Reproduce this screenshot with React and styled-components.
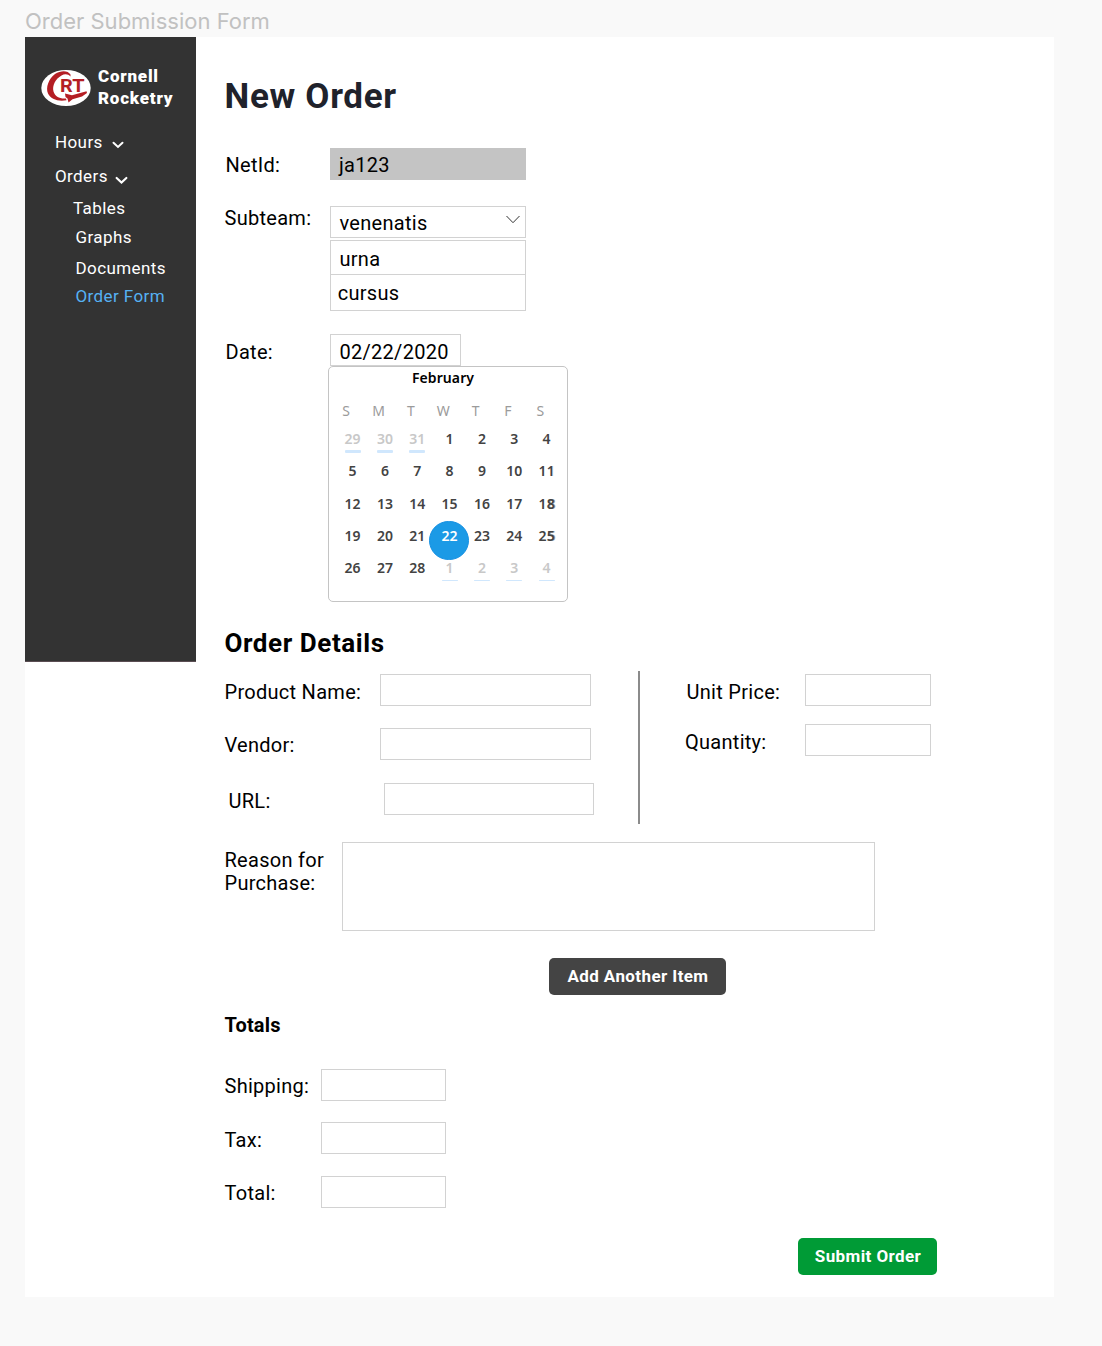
import React from "react";
import styled, { createGlobalStyle, css } from "styled-components";

const GlobalStyle = createGlobalStyle`
  *, *::before, *::after { box-sizing: border-box; }
  body { margin: 0; background: #f9f9f9; font-family: Roboto, "Liberation Sans", sans-serif; color: #000; }
  h1, h2, h3, p { margin: 0; }
`;

const Page = styled.div`
  width: 1102px;
  height: 1346px;
  background: #f9f9f9;
  overflow: hidden;
`;
const FrameTitle = styled.div`
  height: 37px;
  padding: 7px 0 0 25px;
  font: 400 22px/28px Inter, sans-serif;
  color: #c1c1c1;
  white-space: nowrap;
`;
const Frame = styled.div`
  display: flex;
  align-items: flex-start;
  width: 1029px;
  height: 1260px;
  margin-left: 25px;
  background: #fff;
`;
const Sidebar = styled.aside`
  flex: none;
  width: 171px;
  height: 625px;
  padding-top: 29px;
  background: #333;
  border-bottom: 1px solid #5a4d52;
  color: #fff;
`;
const Brand = styled.div`
  display: flex;
  align-items: flex-start;
  gap: 7px;
  padding-left: 16px;
  height: 66px;
  svg { flex: none; margin-top: 3px; }
`;
const BrandName = styled.div`
  font-weight: 900;
  font-size: 17px;
  line-height: 21.5px;
  letter-spacing: 0.78px;
`;
const NavItem = styled.a`
  display: flex;
  align-items: center;
  height: ${(p) => p.$height}px;
  padding-left: ${(p) => p.$indent}px;
  font-size: 17px;
  line-height: 20px;
  letter-spacing: 0.4px;
  white-space: nowrap;
  color: ${(p) => (p.$active ? "#56b1f3" : "#fff")};
  svg { margin: ${(p) => p.$iconTop || 0}px 0 0 ${(p) => p.$iconGap || 0}px; }
`;

const Main = styled.main`
  width: 858px;
  padding-left: 28.5px;
`;
const PageHeading = styled.h1`
  margin-top: 39px;
  height: 72px;
  font-size: 35px;
  line-height: 41px;
  font-weight: 700;
  letter-spacing: 0.7px;
  color: #20222b;
`;
const SectionHeading = styled.h2`
  height: 47px;
  font-size: 26px;
  line-height: 32px;
  font-weight: 700;
  letter-spacing: 0.58px;
`;
const SubHeading = styled.h3`
  height: 56px;
  font-size: 20px;
  line-height: 24px;
  font-weight: 700;
  letter-spacing: 0.2px;
`;
const Row = styled.div`
  display: flex;
  align-items: flex-start;
  height: ${(p) => p.$height}px;
  padding-left: ${(p) => p.$shift || 0}px;
`;
const Label = styled.label`
  flex: none;
  width: ${(p) => p.$width}px;
  padding: ${(p) => p.$top ?? 5}px 0 0 ${(p) => p.$indent || 0}px;
  font-size: 20px;
  line-height: ${(p) => p.$leading || 24}px;
  letter-spacing: 0.28px;
  white-space: nowrap;
`;
const box = css`
  display: flex;
  justify-content: space-between;
  border: 1px solid #d2d2d2;
  background: #fff;
  font-size: 20px;
  line-height: 24px;
  letter-spacing: 0.28px;
`;
const Field = styled.div`
  ${box}
  width: ${(p) => p.$width}px;
  height: ${(p) => p.$height || 32}px;
  padding: ${(p) => p.$top ?? 4}px 5px 0 ${(p) => p.$inset ?? 8.5}px;
  ${(p) => p.$disabled && "background: #c4c4c4; border-color: #c4c4c4;"}
`;
const Select = styled.div`
  width: 196px;
`;
const Options = styled.div`
  margin-top: 2px;
  border: 1px solid #d2d2d2;
`;
const Option = styled.div`
  height: ${(p) => p.$height}px;
  padding: ${(p) => p.$top}px 0 0 ${(p) => p.$inset}px;
  font-size: 20px;
  line-height: 24px;
  letter-spacing: 0.28px;
  & + & { border-top: 1px solid #d2d2d2; }
`;
const DateRow = styled(Row)`
  position: relative;
`;
const Calendar = styled.div`
  position: absolute;
  left: 103.5px;
  top: 32px;
  width: 240px;
  height: 236px;
  border: 1px solid #c4c4c4;
  border-radius: 5px;
  background: #fff;
  font-family: "Noto Sans", "Open Sans", sans-serif;
  font-size: 14px;
`;
const Month = styled.div`
  height: 35px;
  padding: 1px 10px 0 0;
  text-align: center;
  line-height: 20px;
  letter-spacing: 0.1px;
  font-weight: 600;
`;
const Weekdays = styled.div`
  display: grid;
  grid-template-columns: repeat(7, 32.35px);
  height: 28px;
  padding-left: 1px;
  line-height: 18px;
  text-align: center;
  color: #9b9b9b;
`;
const Days = styled.div`
  display: grid;
  grid-template-columns: repeat(7, 32.35px);
  grid-auto-rows: 32.35px;
  padding-left: 7.4px;
`;
const Day = styled.div`
  position: relative;
  text-align: center;
  line-height: 18px;
  font-weight: 600;
  color: ${(p) => (p.$muted ? "#c8c8c8" : "#434343")};
  ${(p) =>
    p.$muted &&
    css`
      &::after {
        content: "";
        display: block;
        width: 16px;
        height: ${p.$late ? 1.4 : 3}px;
        margin: ${p.$late ? 2.4 : 2}px auto 0;
        border-radius: 1px;
        background: #d0e7fd;
      }
    `}
  ${(p) =>
    p.$selected &&
    css`
      color: #fff;
      z-index: 1;
      &::before {
        content: "";
        position: absolute;
        z-index: -1;
        left: -4.2px;
        top: -6.3px;
        width: 39.5px;
        height: 39.5px;
        border: 1px solid #1590e3;
        border-radius: 50%;
        background: #1b9ae6;
      }
    `}
`;
const DoubledDigit = styled.span`
  text-shadow: 1px 0 ${(p) => (p.$faint ? "#eee" : "#9a9a9a")};
`;
const Details = styled.div`
  display: flex;
  height: 168px;
`;
const DetailsLeft = styled.div`
  width: 413.5px;
`;
const DetailsRight = styled.div`
  width: 320px;
  padding-left: 45px;
`;
const Divider = styled.div`
  flex: none;
  width: 2px;
  height: 153px;
  margin-top: -3px;
  background: #8b8b8b;
`;
const Actions = styled.div`
  display: flex;
  height: ${(p) => p.$height}px;
  padding-left: ${(p) => p.$offset}px;
`;
const Button = styled.button`
  width: ${(p) => p.$width}px;
  height: 37px;
  padding: 0 0 1px 1px;
  border: 0;
  border-radius: 5px;
  background: ${(p) => (p.$primary ? "#009b36" : "#444")};
  color: #fff;
  font: 700 17px/20px Roboto, sans-serif;
  letter-spacing: 0.4px;
  white-space: nowrap;
`;

const Logo = () => (
  <svg width="50" height="38" viewBox="0 0 50 38">
    <ellipse cx="25" cy="19" rx="24.7" ry="18" fill="#fff" />
    <path d="M29.500 5.500C27 1.300 20 1 14 5C7.500 10 4.500 18.500 7 24.500C9.500 30 17 32.800 25.500 31.200L25 29.500C18.500 30 14 27.500 12.500 22.500C11 16.500 14.500 9.800 20.500 6.500C23.500 4.800 27 4.800 29.500 7.500Z" fill="#b41e24" />
    <path d="M24 24.500L31 26.300L45.500 22.300L46 24L41 27.500L31.500 30.300L27.500 33.500L26.500 29.500L24.500 28Z" fill="#b41e24" />
    <text x="19" y="23.300" fontFamily="Roboto, sans-serif" fontWeight="700" fontSize="18" textLength="24.500" lengthAdjust="spacingAndGlyphs" fill="#b41e24">RT</text>
  </svg>
);
const Chevron = ({ size = 12 }) => (
  <svg width={size} height={(size * 8) / 12} viewBox="0 0 12 8" fill="none">
    <path d="M1.500 1.800L6 6L10.500 1.800" stroke="#fff" strokeWidth="2" strokeLinecap="round" />
  </svg>
);
const CaretIcon = styled.svg`
  margin-top: 4px;
`;
const Caret = () => (
  <CaretIcon width="14" height="9" viewBox="0 0 14 9" fill="none">
    <path d="M.5 1L7 7.700L13.500 1" stroke="#333" />
  </CaretIcon>
);

const DAYS = [
  29, 30, 31, 1, 2, 3, 4, 5, 6, 7, 8, 9, 10, 11, 12, 13, 14, 15, 16, 17, 18,
  19, 20, 21, 22, 23, 24, 25, 26, 27, 28, 1, 2, 3, 4,
];
const DOUBLED = [11, 18, 25];

const dayText = (d) =>
  DOUBLED.includes(d) ? (
    <>{Math.floor(d / 10)}<DoubledDigit $faint={d === 11}>{d % 10}</DoubledDigit></>
  ) : d;

export default function App() {
  return (
    <Page>
      <GlobalStyle />
      <FrameTitle>Order Submission Form</FrameTitle>
      <Frame>
        <Sidebar>
          <Brand>
            <Logo />
            <BrandName>Cornell<br />Rocketry</BrandName>
          </Brand>
          <NavItem $indent={30} $height={20} $iconGap={9} $iconTop={5}>Hours<Chevron /></NavItem>
          <NavItem $indent={30} $height={47} $iconGap={7} $iconTop={9}>Orders<Chevron size={13} /></NavItem>
          <NavItem $indent={48} $height={17}>Tables</NavItem>
          <NavItem $indent={50.5} $height={42}>Graphs</NavItem>
          <NavItem $indent={50.5} $height={19}>Documents</NavItem>
          <NavItem $indent={50.5} $height={37} $active>Order Form</NavItem>
        </Sidebar>
        <Main>
          <PageHeading>New Order</PageHeading>
          <Row $height={58}>
            <Label $width={105.5} $indent={1}>NetId:</Label>
            <Field $width={196} $disabled $inset={8}>ja123</Field>
          </Row>
          <Row $height={128}>
            <Label $width={105.5} $top={0}>Subteam:</Label>
            <Select>
              <Field $width={196}>venenatis<Caret /></Field>
              <Options>
                <Option $height={33} $top={6} $inset={8.5}>urna</Option>
                <Option $height={36} $top={6} $inset={6.7}>cursus</Option>
              </Options>
            </Select>
          </Row>
          <DateRow $height={293}>
            <Label $width={105.5} $top={6} $indent={1}>Date:</Label>
            <Field $width={131} $top={5}>02/22/2020</Field>
            <Calendar>
              <Month>February</Month>
              <Weekdays>
                {["S", "M", "T", "W", "T", "F", "S"].map((d, i) => <span key={i}>{d}</span>)}
              </Weekdays>
              <Days>
                {DAYS.map((d, i) => (
                  <Day key={i} $muted={i < 3 || i > 30} $late={i > 30} $selected={i === 24}>{dayText(d)}</Day>
                ))}
              </Days>
            </Calendar>
          </DateRow>
          <SectionHeading>Order Details</SectionHeading>
          <Details>
            <DetailsLeft>
              <Row $height={54}><Label $width={155.5} $top={6}>Product Name:</Label><Field $width={211} /></Row>
              <Row $height={55}><Label $width={155.5}>Vendor:</Label><Field $width={211} /></Row>
              <Row $height={32} $shift={4}><Label $width={155.5} $top={6}>URL:</Label><Field $width={210} /></Row>
            </DetailsLeft>
            <Divider />
            <DetailsRight>
              <Row $height={50}><Label $width={120} $indent={1.5} $top={6}>Unit Price:</Label><Field $width={126} /></Row>
              <Row $height={32}><Label $width={120} $top={6}>Quantity:</Label><Field $width={126} /></Row>
            </DetailsRight>
          </Details>
          <Row $height={116}>
            <Label $width={117.5} $leading={23} $top={7}>Reason for<br />Purchase:</Label>
            <Field $width={533} $height={89} />
          </Row>
          <Actions $offset={324.5} $height={55}>
            <Button $width={177}>Add Another Item</Button>
          </Actions>
          <SubHeading>Totals</SubHeading>
          <Row $height={53}><Label $width={96.5}>Shipping:</Label><Field $width={125} /></Row>
          <Row $height={54}><Label $width={96.5} $top={6}>Tax:</Label><Field $width={125} /></Row>
          <Row $height={62}><Label $width={96.5}>Total:</Label><Field $width={125} /></Row>
          <Actions $offset={573.5} $height={37}>
            <Button $width={139} $primary>Submit Order</Button>
          </Actions>
        </Main>
      </Frame>
    </Page>
  );
}
